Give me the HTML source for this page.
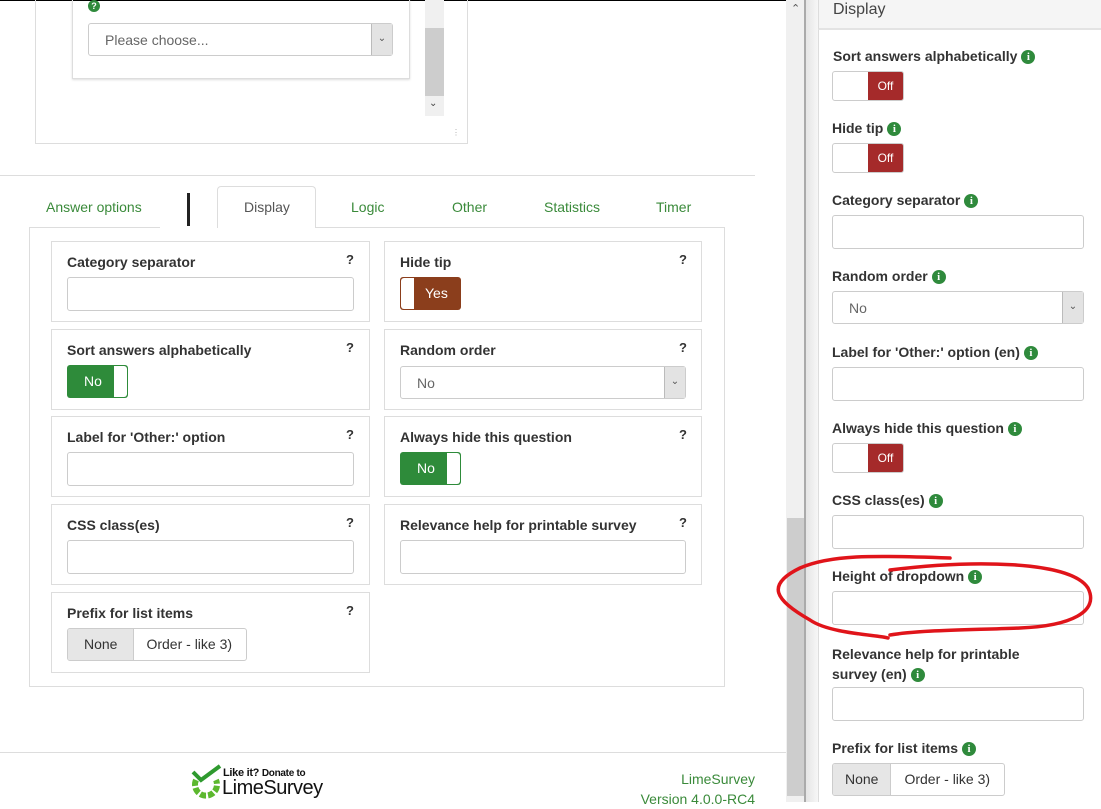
<!DOCTYPE html>
<html><head><meta charset="utf-8"><style>
*{box-sizing:border-box;margin:0;padding:0}
body{width:1101px;height:802px;overflow:hidden;background:#fff;font-family:"Liberation Sans",Arial,sans-serif;color:#333;position:relative}
.a{position:absolute}
.card{position:absolute;border:1px solid #ddd;background:#fff}
.lbl{position:absolute;font-weight:bold;font-size:14px;color:#333;white-space:nowrap}
.q{position:absolute;font-weight:bold;font-size:13px;color:#333}
.inp{position:absolute;border:1px solid #ccc;border-radius:3px;background:#fff;height:34px}
.sel{position:absolute;border:1px solid #ccc;border-radius:3px;background:#fff;height:33px;font-size:14px;color:#666}
.sel .arr{position:absolute;right:0;top:0;bottom:0;width:21px;background:#e3e3e3;border-left:1px solid #bbb;font-size:10px;color:#555;text-align:center;line-height:30px}
.tg{position:absolute;height:33px;width:61px;border-radius:3px;font-size:14px;color:#fff;overflow:hidden}
.tab{position:absolute;top:199px;font-size:14px;color:#3a8a3a}
.ri{display:inline-block;width:14px;height:14px;border-radius:50%;background:#2f8a3c;color:#fff;font-size:11px;line-height:14px;text-align:center;font-weight:bold;font-family:"Liberation Serif",serif;vertical-align:1px;margin-left:4px}
.off{position:absolute;width:72px;height:30px;border:1px solid #ccc;border-radius:3px;overflow:hidden;background:#fff}
.off span{position:absolute;right:0;top:0;bottom:0;width:35px;background:#a52a2a;color:#fff;font-size:12px;text-align:center;line-height:29px}
.btng{position:absolute;height:33px;border:1px solid #ccc;border-radius:3px;font-size:14px;display:flex;overflow:hidden}
.btng div{line-height:31px;padding:0 12px;color:#333}
</style></head><body>
<div class="a" style="left:0;top:0;width:1101px;height:1px;background:#000"></div>
<div class="a" style="left:35px;top:0;width:433px;height:144px;border:1px solid #ddd;border-top:none"></div>
<div class="a" style="left:72px;top:0;width:338px;height:79px;border:1px solid #ddd;border-top:none;box-shadow:0 1px 2px #ddd"></div>
<div class="a ri" style="left:88px;top:0;width:12px;height:12px;line-height:12px;margin:0;font-family:'Liberation Sans';font-size:9px">?</div>
<div class="sel" style="left:88px;top:23px;width:305px;height:33px"><span class="a" style="left:16px;top:8px">Please choose...</span><div class="arr">&#8964;</div></div>
<div class="a" style="left:425px;top:0;width:19px;height:116px;background:#f0f0f0"></div>
<div class="a" style="left:425px;top:28px;width:19px;height:68px;background:#cdcdcd"></div>
<div class="a" style="left:429px;top:98px;font-size:10px;color:#444">&#8964;</div>
<div class="a" style="left:452px;top:128px;font-size:8px;color:#aaa">&#8942;</div>
<div class="a" style="left:0;top:175px;width:755px;height:1px;background:#ddd"></div>
<div class="tab" style="left:46px">Answer options</div>
<div class="a" style="left:187px;top:193px;width:3px;height:34px;background:#222"></div>
<div class="a" style="left:217px;top:186px;width:99px;height:42px;border:1px solid #ddd;border-bottom:none;border-radius:4px 4px 0 0;background:#fff;z-index:2"></div>
<div class="tab" style="left:244px;color:#555;z-index:3">Display</div>
<div class="tab" style="left:351px">Logic</div>
<div class="tab" style="left:452px">Other</div>
<div class="tab" style="left:544px">Statistics</div>
<div class="tab" style="left:656px">Timer</div>
<div class="a" style="left:29px;top:227px;width:696px;height:460px;border:1px solid #ddd"></div>
<div class="a" style="left:160px;top:226px;width:57px;height:3px;background:#fff"></div>
<div class="card" style="left:51px;top:241px;width:319px;height:81px"></div>
<div class="lbl" style="left:67px;top:254px">Category separator</div><div class="q" style="left:346px;top:252px">?</div>
<div class="inp" style="left:67px;top:277px;width:287px"></div>
<div class="card" style="left:51px;top:329px;width:319px;height:81px"></div>
<div class="lbl" style="left:67px;top:342px">Sort answers alphabetically</div><div class="q" style="left:346px;top:340px">?</div>
<div class="tg" style="left:67px;top:365px;background:#2e8b3a"><span class="a" style="left:17px;top:8px">No</span><div class="a" style="left:47px;top:1px;width:13px;height:31px;background:#fff;border-radius:0 3px 3px 0"></div></div>
<div class="card" style="left:51px;top:416px;width:319px;height:81px"></div>
<div class="lbl" style="left:67px;top:429px">Label for 'Other:' option</div><div class="q" style="left:346px;top:427px">?</div>
<div class="inp" style="left:67px;top:452px;width:287px"></div>
<div class="card" style="left:51px;top:504px;width:319px;height:81px"></div>
<div class="lbl" style="left:67px;top:517px">CSS class(es)</div><div class="q" style="left:346px;top:515px">?</div>
<div class="inp" style="left:67px;top:540px;width:287px"></div>
<div class="card" style="left:51px;top:592px;width:319px;height:81px"></div>
<div class="lbl" style="left:67px;top:605px">Prefix for list items</div><div class="q" style="left:346px;top:603px">?</div>
<div class="btng" style="left:67px;top:628px;width:180px"><div style="background:#e6e6e6;border-right:1px solid #ccc;padding:0 16px">None</div><div>Order - like 3)</div></div>
<div class="card" style="left:384px;top:241px;width:318px;height:81px"></div>
<div class="lbl" style="left:400px;top:254px">Hide tip</div><div class="q" style="left:679px;top:252px">?</div>
<div class="tg" style="left:400px;top:277px;background:#8b3e1c"><div class="a" style="left:1px;top:1px;width:13px;height:31px;background:#fff;border-radius:3px 0 0 3px"></div><span class="a" style="left:25px;top:8px">Yes</span></div>
<div class="card" style="left:384px;top:329px;width:318px;height:81px"></div>
<div class="lbl" style="left:400px;top:342px">Random order</div><div class="q" style="left:679px;top:340px">?</div>
<div class="sel" style="left:400px;top:366px;width:286px"><span class="a" style="left:16px;top:8px">No</span><div class="arr">&#8964;</div></div>
<div class="card" style="left:384px;top:416px;width:318px;height:81px"></div>
<div class="lbl" style="left:400px;top:429px">Always hide this question</div><div class="q" style="left:679px;top:427px">?</div>
<div class="tg" style="left:400px;top:452px;background:#2e8b3a"><span class="a" style="left:17px;top:8px">No</span><div class="a" style="left:47px;top:1px;width:13px;height:31px;background:#fff;border-radius:0 3px 3px 0"></div></div>
<div class="card" style="left:384px;top:504px;width:318px;height:81px"></div>
<div class="lbl" style="left:400px;top:517px">Relevance help for printable survey</div><div class="q" style="left:679px;top:515px">?</div>
<div class="inp" style="left:400px;top:540px;width:286px"></div>
<div class="a" style="left:0;top:752px;width:786px;height:1px;background:#ddd"></div>
<svg class="a" style="left:190px;top:764px" width="34" height="38" viewBox="0 0 34 38"><path d="M6 16 A11 11 0 1 0 26 16" fill="none" stroke="#5cb82e" stroke-width="6" stroke-dasharray="6 2"/><path d="M3 8 L11 16 L30 2" fill="none" stroke="#2f9a2f" stroke-width="4"/></svg>
<div class="a" style="left:223px;top:767px;font-size:11px;font-weight:bold;color:#111;letter-spacing:-0.3px">Like it? <span style="font-size:10px">Donate to</span></div>
<div class="a" style="left:222px;top:777px;font-size:20px;color:#111;letter-spacing:-0.5px">LimeSurvey</div>
<div class="a" style="left:600px;top:769px;width:155px;text-align:right;font-size:14px;color:#3a8a3a;line-height:20px">LimeSurvey<br>Version 4.0.0-RC4</div>
<div class="a" style="left:786px;top:0;width:18px;height:802px;background:#f0f0f0"></div>
<div class="a" style="left:787px;top:518px;width:17px;height:278px;background:#cdcdcd"></div>
<div class="a" style="left:791px;top:2px;font-size:11px;color:#555">&#8963;</div>
<div class="a" style="left:804px;top:0;width:2px;height:802px;background:#aaa"></div>
<div class="a" style="left:806px;top:0;width:12px;height:802px;background:linear-gradient(to right,#e5e5e5,#f7f7f7)"></div>
<div class="a" style="left:818px;top:0;width:283px;height:802px;background:#fff;border-left:1px solid #ddd"></div>
<div class="a" style="left:818px;top:0;width:283px;height:30px;background:#f5f5f5;border-bottom:2px solid #e3e3e3;border-left:1px solid #ddd"></div>
<div class="a" style="left:833px;top:1px;font-size:16px;color:#444">Display</div>
<div class="lbl" style="left:833px;top:48px">Sort answers alphabetically<span class="ri">i</span></div>
<div class="off" style="left:832px;top:71px"><span>Off</span></div>
<div class="lbl" style="left:832px;top:120px">Hide tip<span class="ri">i</span></div>
<div class="off" style="left:832px;top:143px"><span>Off</span></div>
<div class="lbl" style="left:832px;top:192px">Category separator<span class="ri">i</span></div>
<div class="inp" style="left:832px;top:215px;width:252px"></div>
<div class="lbl" style="left:832px;top:268px">Random order<span class="ri">i</span></div>
<div class="sel" style="left:832px;top:291px;width:252px"><span class="a" style="left:16px;top:8px">No</span><div class="arr">&#8964;</div></div>
<div class="lbl" style="left:832px;top:344px">Label for 'Other:' option (en)<span class="ri">i</span></div>
<div class="inp" style="left:832px;top:367px;width:252px"></div>
<div class="lbl" style="left:832px;top:420px">Always hide this question<span class="ri">i</span></div>
<div class="off" style="left:832px;top:443px"><span>Off</span></div>
<div class="lbl" style="left:832px;top:492px">CSS class(es)<span class="ri">i</span></div>
<div class="inp" style="left:832px;top:515px;width:252px"></div>
<div class="lbl" style="left:832px;top:568px">Height of dropdown<span class="ri">i</span></div>
<div class="inp" style="left:832px;top:591px;width:252px"></div>
<div class="lbl" style="left:832px;top:644px;line-height:20px">Relevance help for printable<br>survey (en)<span class="ri">i</span></div>
<div class="inp" style="left:832px;top:687px;width:252px"></div>
<div class="lbl" style="left:832px;top:740px">Prefix for list items<span class="ri">i</span></div>
<div class="btng" style="left:832px;top:763px;width:173px"><div style="background:#e6e6e6;border-right:1px solid #ccc">None</div><div style="padding:0 13px">Order - like 3)</div></div>
<svg class="a" style="left:770px;top:550px" width="331" height="100" viewBox="0 0 331 100"><path d="M120 20 C200 10 300 10 318 38 C330 62 300 76 250 78 C200 80 150 80 120 85 M118 88 C110 85 60 84 40 70 C5 50 -5 35 30 18 C60 5 100 5 180 8" fill="none" stroke="#e0141a" stroke-width="3.5" stroke-linecap="round"/></svg>
</body></html>
